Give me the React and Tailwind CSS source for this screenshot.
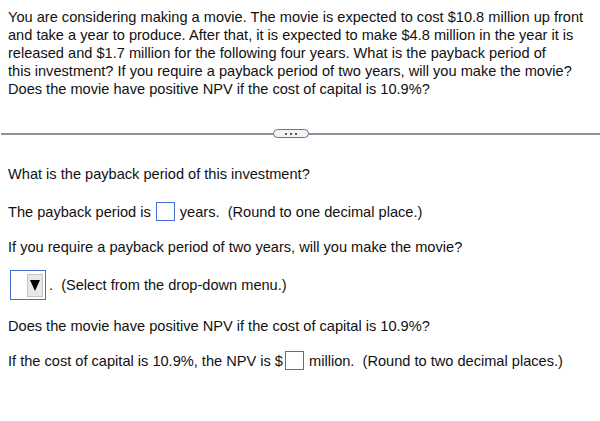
import React from "react";

function Box() {
  return <span className="inline-block w-[19px] h-[19px] border border-[#4a6ed0] align-middle bg-white" />;
}

export default function App() {
  return (
    <div className="w-[600px] h-[421px] bg-white text-black text-[14.6px] leading-[18px]" style={{ fontFamily: '"Liberation Sans", Arial, sans-serif' }}>
      <p className="pt-[8px] pl-[8px] text-[#111] whitespace-nowrap">
        You are considering making a movie. The movie is expected to cost $10.8 million up front<br />
        and take a year to produce. After that, it is expected to make $4.8 million in the year it is<br />
        released and $1.7 million for the following four years. What is the payback period of<br />
        this investment? If you require a payback period of two years, will you make the movie?<br />
        Does the movie have positive NPV if the cost of capital is 10.9%?
      </p>
      <div className="relative mt-[31px] ml-[1px] h-[9px] flex items-center">
        <div className="flex-1 h-[2px] bg-[#8a949e]" />
        <div className="absolute left-[272px] top-0 w-[36px] h-[9px] rounded-full border border-[#6b7785] bg-[#f2f4f6] flex items-center justify-center gap-[3px]">
          <span className="w-[2px] h-[2px] bg-[#4b5563]" />
          <span className="w-[2px] h-[2px] bg-[#4b5563]" />
          <span className="w-[2px] h-[2px] bg-[#4b5563]" />
        </div>
      </div>
      <div className="pl-[8px] text-[#111]">
        <div className="mt-[27px]">What is the payback period of this investment?</div>
        <div className="mt-[19px] flex items-center">
          <span>The payback period is</span>
          <span className="ml-[5px] flex"><Box /></span>
          <span className="ml-[5px]">years.&nbsp;&nbsp;(Round to one decimal place.)</span>
        </div>
        <div className="mt-[17px]">If you require a payback period of two years, will you make the movie?</div>
        <div className="mt-[14px] flex items-center">
          <span className="ml-[2px] w-[36px] h-[30px] border border-[#4a6ed0] flex items-center justify-end pr-[2px]">
            <span className="w-[16px] h-[23px] bg-[#e8e8e8] border border-[#c4c4c4] flex items-center justify-center">
              <svg width="10" height="11" viewBox="0 0 10 11"><path d="M0 0 H10 L5 11 Z" fill="#000" /></svg>
            </span>
          </span>
          <span className="ml-[3px]">.&nbsp;&nbsp;(Select from the drop-down menu.)</span>
        </div>
        <div className="mt-[17px]">Does the movie have positive NPV if the cost of capital is 10.9%?</div>
        <div className="mt-[16px] flex items-center">
          <span>If the cost of capital is 10.9%, the NPV is $</span>
          <span className="ml-[2px] flex"><Box /></span>
          <span className="ml-[5px]">million.&nbsp;&nbsp;(Round to two decimal places.)</span>
        </div>
      </div>
    </div>
  );
}
